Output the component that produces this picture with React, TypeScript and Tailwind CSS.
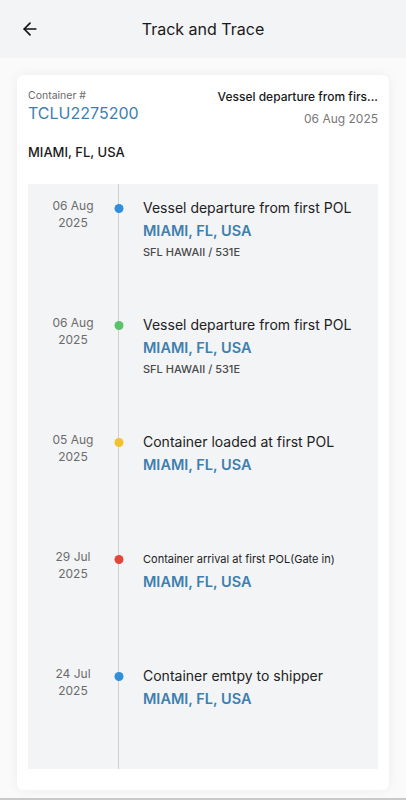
import { ArrowLeft } from "lucide-react";

type TrackEvent = {
  day: string;
  year: string;
  title: string;
  small?: boolean;
  location: string;
  vessel?: string;
  dot: string;
};

const EVENTS: TrackEvent[] = [
  {
    day: "06 Aug",
    year: "2025",
    title: "Vessel departure from first POL",
    location: "MIAMI, FL, USA",
    vessel: "SFL HAWAII / 531E",
    dot: "bg-[#2f8fdd]",
  },
  {
    day: "06 Aug",
    year: "2025",
    title: "Vessel departure from first POL",
    location: "MIAMI, FL, USA",
    vessel: "SFL HAWAII / 531E",
    dot: "bg-[#5cc26a]",
  },
  {
    day: "05 Aug",
    year: "2025",
    title: "Container loaded at first POL",
    location: "MIAMI, FL, USA",
    dot: "bg-[#f2c12e]",
  },
  {
    day: "29 Jul",
    year: "2025",
    title: "Container arrival at first POL(Gate in)",
    small: true,
    location: "MIAMI, FL, USA",
    dot: "bg-[#e2473b]",
  },
  {
    day: "24 Jul",
    year: "2025",
    title: "Container emtpy to shipper",
    location: "MIAMI, FL, USA",
    dot: "bg-[#2f8fdd]",
  },
];

function TimelineRow({ ev }: { ev: TrackEvent }) {
  return (
    <div className="flex h-[117px]">
      <div className="flex w-[90px] shrink-0 flex-col items-center pt-[13px] text-[12px] leading-[17px] text-[#6b6b6b]">
        <span>{ev.day}</span>
        <span>{ev.year}</span>
      </div>
      <div className="relative w-px shrink-0 bg-[#cfcfd2]">
        <span
          className={`absolute left-1/2 top-[20px] h-[9px] w-[9px] -translate-x-1/2 rounded-full ${ev.dot}`}
        />
      </div>
      <div className="min-w-0 flex-1 pl-[24px] pt-[14px]">
        <p
          className={
            ev.small
              ? "h-[20px] text-[11px] leading-[20px] text-[#222]"
              : "h-[20px] text-[14px] leading-[20px] text-[#222]"
          }
        >
          {ev.title}
        </p>
        <p className="mt-[3px] text-[14.5px] font-semibold leading-[20px] text-[#3d7fae]">
          {ev.location}
        </p>
        {ev.vessel && (
          <p className="mt-[3px] text-[11px] font-medium leading-[16px] text-[#4a4a4a]">
            {ev.vessel}
          </p>
        )}
      </div>
    </div>
  );
}

export default function App() {
  return (
    <div
      className="flex h-[800px] w-full flex-col overflow-hidden border-b-2 border-[#c9c9c9] bg-[#fafafa]"
      style={{ fontFamily: "Inter, 'Noto Sans', sans-serif" }}
    >
      <header className="relative flex h-[58px] shrink-0 items-center justify-center bg-[#f3f4f6]">
        <button type="button" className="absolute left-[20px] top-[19px] text-[#111]" aria-label="Back">
          <ArrowLeft size={20} strokeWidth={2} />
        </button>
        <h1 className="text-[16px] text-[#1a1a1a]">Track and Trace</h1>
      </header>

      <div className="px-[17px] pt-[17px]">
        <div className="rounded-[6px] bg-white px-[11px] pb-[21px] pt-[14px] shadow-[0_0_12px_rgba(0,0,0,0.06)]">
          <div className="flex items-start justify-between">
            <div>
              <p className="text-[10.5px] leading-[14px] text-[#6b6b6b]">Container #</p>
              <p className="text-[16px] leading-[20px] text-[#3d7fae]">TCLU2275200</p>
            </div>
            <div className="flex flex-col items-end">
              <p className="whitespace-nowrap text-[12px] font-medium leading-[16px] text-[#1a1a1a]">
                Vessel departure from firs...
              </p>
              <p className="mt-[6px] text-[12px] leading-[16px] text-[#777]">06 Aug 2025</p>
            </div>
          </div>
          <p className="mt-[16px] text-[13px] font-medium leading-[18px] text-[#1a1a1a]">MIAMI, FL, USA</p>

          <div className="mt-[23px] bg-[#f3f4f6]">
            {EVENTS.map((ev, i) => (
              <TimelineRow key={i} ev={ev} />
            ))}
          </div>
        </div>
      </div>
    </div>
  );
}
